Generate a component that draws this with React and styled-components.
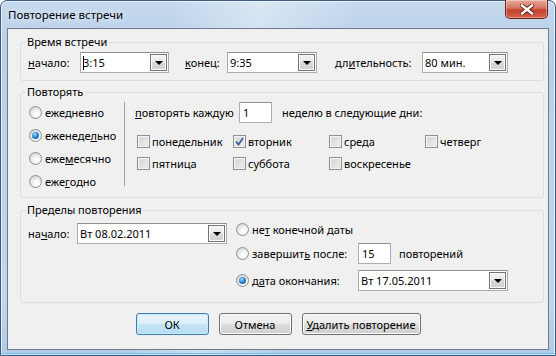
import styled, { createGlobalStyle } from "styled-components";

const FONT = `"Noto Sans", "Segoe UI", sans-serif`;

const GlobalStyle = createGlobalStyle`
  html, body { margin: 0; padding: 0; }
  body {
    width: 556px;
    height: 356px;
    overflow: hidden;
    font-family: ${FONT};
    font-size: 11px;
    color: #000;
  }
  * { box-sizing: border-box; }
`;

const Window = styled.div`
  width: 556px;
  height: 356px;
  display: flex;
  flex-direction: column;
  padding: 0 6px 5px;
  border: 1px solid #3d5d80;
  border-radius: 7px 7px 0 0;
  background:
    linear-gradient(100deg, rgba(255,255,255,0) 28%, rgba(255,255,255,0.35) 42%, rgba(255,255,255,0) 58%),
    linear-gradient(#c6daee, #b9d0e8 12%, #c0d6eb 85%, #b1cbe5);
  box-shadow: inset 0 0 0 1px rgba(255,255,255,0.6), inset 0 -2px 0 #73bdea;
`;

const TitleBar = styled.div`
  height: 27px;
  display: flex;
  align-items: center;
  justify-content: space-between;
  padding-left: 1px;
`;

const Title = styled.div`
  font-size: 11.5px;
  text-shadow: 0 0 6px rgba(255,255,255,0.9);
`;

const CloseButton = styled.div`
  align-self: flex-start;
  width: 43px;
  height: 19px;
  margin-top: -1px;
  margin-right: 1px;
  border: 1px solid #6b2418;
  border-top: none;
  border-radius: 0 0 5px 5px;
  background: linear-gradient(#e8a898, #d57461 45%, #c3412b 55%, #d8604a);
  box-shadow: inset 0 0 0 1px rgba(255,255,255,0.35);
  display: flex;
  align-items: center;
  justify-content: center;
`;

const Client = styled.div`
  flex: 1;
  display: flex;
  flex-direction: column;
  background: #f0f0f0;
  border: 1px solid #6c7a8b;
`;

const Group = styled.fieldset`
  margin: ${p => p.$top}px 4px 0 12px;
  padding: 0;
  min-width: 0;
  border: 1px solid #d5dfe5;
  border-radius: 3px;
`;

const Legend = styled.legend`
  margin-left: 5px;
  padding: 0 1px;
  line-height: 14px;
  font-size: 11px;
`;

const Acc = styled.span`
  text-decoration: underline;
`;

const TimeRow = styled.div`
  display: flex;
  align-items: center;
  padding: 3px 0 7px 7px;
`;

const Label = styled.span`
  width: ${p => (p.$w ? `${p.$w}px` : "auto")};
  margin-left: ${p => p.$ml || 0}px;
  flex: none;
  white-space: nowrap;
`;

const Combo = styled.div`
  width: ${p => p.$w}px;
  height: 21px;
  flex: none;
  display: flex;
  background: #fff;
  border: 1px solid #a9abb0;
  border-top-color: #8d9096;
`;

const ComboText = styled.div`
  flex: 1;
  display: flex;
  align-items: center;
  padding-left: 2px;
  white-space: nowrap;
`;

const Caret = styled.span`
  display: inline-block;
  width: 1px;
  height: 14px;
  margin-right: -1px;
  background: #000;
`;

const DropButton = styled.div`
  width: 17px;
  margin: 1px;
  border: 1px solid #747474;
  background: linear-gradient(#f4f4f4, #e6e6e6 50%, #d8d8d8 50%, #d2d2d2);
  box-shadow: inset 0 0 0 1px #fafafa;
  display: flex;
  align-items: center;
  justify-content: center;
  &::after {
    content: "";
    border-left: 4px solid transparent;
    border-right: 4px solid transparent;
    border-top: 4px solid #000;
    margin-top: 1px;
  }
`;

const TextInput = styled.div`
  width: ${p => p.$w}px;
  height: 21px;
  flex: none;
  display: flex;
  align-items: center;
  padding-left: 3px;
  background: #fff;
  border: 1px solid #abadb3;
  border-top-color: #8e9196;
`;

const RepeatBody = styled.div`
  display: flex;
  padding-bottom: 4px;
`;

const FreqColumn = styled.div`
  width: 103px;
  flex: none;
  padding: 2px 0 0 8px;
`;

const Option = styled.div`
  height: ${p => p.$h || 23}px;
  width: ${p => (p.$w ? `${p.$w}px` : "auto")};
  flex: none;
  display: flex;
  align-items: center;
  white-space: nowrap;
`;

const Radio = styled.span`
  width: 13px;
  height: 13px;
  flex: none;
  margin-right: 3px;
  border-radius: 50%;
  border: 1px solid #8e8f8f;
  background: radial-gradient(circle at 60% 65%, #fdfdfd 20%, #e2e2e2 60%, #c9c9c9);
  display: flex;
  align-items: center;
  justify-content: center;
  &::after {
    content: "";
    display: ${p => (p.$on ? "block" : "none")};
    width: 7px;
    height: 7px;
    border-radius: 50%;
    background: radial-gradient(circle at 40% 35%, #a6e0ff, #2a89d8 45%, #0d3f80);
  }
`;

const DaysColumn = styled.div`
  flex: 1;
  margin: 3px 0 7px;
  padding-left: 10px;
  border-left: 1px solid #a0a0a0;
`;

const EveryRow = styled.div`
  height: 21px;
  display: flex;
  align-items: center;
`;

const DaysGrid = styled.div`
  display: grid;
  grid-template-columns: repeat(4, 96px);
  row-gap: 6px;
  margin: 10px 0 0 2px;
`;

const Day = styled.div`
  height: 16px;
  display: flex;
  align-items: center;
  white-space: nowrap;
`;

const Box = styled.span`
  width: 13px;
  height: 13px;
  flex: none;
  margin-right: 2px;
  border: 1px solid #8e8f8f;
  background: linear-gradient(135deg, #cfcfcf, #f6f6f6);
  box-shadow: inset 0 0 0 1px #f4f4f4, inset 0 0 0 2px #e0e0e0;
  display: flex;
  align-items: center;
  justify-content: center;
`;

const RangeBody = styled.div`
  display: flex;
  align-items: flex-start;
  padding: 2px 0 11px 7px;
`;

const StartRow = styled.div`
  display: flex;
  align-items: center;
  margin-top: 4px;
`;

const EndColumn = styled.div`
  margin-left: 9px;
  display: flex;
  flex-direction: column;
`;

const EndRow = styled.div`
  height: ${p => p.$h}px;
  margin-top: ${p => p.$mt || 0}px;
  display: flex;
  align-items: center;
`;

const ButtonRow = styled.div`
  display: flex;
  justify-content: center;
  gap: 10px;
  margin-top: 10px;
`;

const Button = styled.button`
  width: ${p => p.$w}px;
  height: 22px;
  padding: 0;
  white-space: nowrap;
  font-family: ${FONT};
  font-size: 11px;
  color: #000;
  border-radius: 3px;
  border: 1px solid ${p => (p.$primary ? "#3c7fb1" : "#707070")};
  background: ${p =>
    p.$primary
      ? "linear-gradient(#e9f5fd, #dbeffb 50%, #c6e5f8 50%, #b8ddf4)"
      : "linear-gradient(#f2f2f2, #ebebeb 50%, #dddddd 50%, #cfcfcf)"};
  box-shadow: inset 0 0 0 1px ${p => (p.$primary ? "#c9ecfc" : "#fcfcfc")};
`;

function Check({ on }) {
  return (
    <Box>
      {on && (
        <svg width="9" height="9" viewBox="0 0 9 9">
          <path d="M1 4.5 L3.5 7.5 L8 1" fill="none" stroke="#3d5a9c" strokeWidth="1.7" />
        </svg>
      )}
    </Box>
  );
}

function CloseGlyph() {
  return (
    <svg width="14" height="11" viewBox="0 0 14 11">
      <path d="M2 1.5 L12 9.5 M12 1.5 L2 9.5" stroke="#5a1a10" strokeWidth="4.2" strokeLinecap="square" />
      <path d="M2 1.5 L12 9.5 M12 1.5 L2 9.5" stroke="#fff" strokeWidth="2.4" strokeLinecap="square" />
    </svg>
  );
}

const days = [
  { name: "понедельник" },
  { name: "вторник", on: true },
  { name: "среда" },
  { name: "четверг" },
  { name: "пятница" },
  { name: "суббота" },
  { name: "воскресенье" },
];

export default function App() {
  return (
    <>
      <GlobalStyle />
      <Window>
        <TitleBar>
          <Title>Повторение встречи</Title>
          <CloseButton>
            <CloseGlyph />
          </CloseButton>
        </TitleBar>
        <Client>
          <Group $top={6}>
            <Legend>Время встречи</Legend>
            <TimeRow>
              <Label $w={52}><Acc>н</Acc>ачало:</Label>
              <Combo $w={89}>
                <ComboText><Caret />3:15</ComboText>
                <DropButton />
              </Combo>
              <Label $w={42} $ml={16}><Acc>к</Acc>онец:</Label>
              <Combo $w={90}>
                <ComboText>9:35</ComboText>
                <DropButton />
              </Combo>
              <Label $w={87} $ml={18}>дл<Acc>и</Acc>тельность:</Label>
              <Combo $w={86}>
                <ComboText>80 мин.</ComboText>
                <DropButton />
              </Combo>
            </TimeRow>
          </Group>

          <Group $top={4}>
            <Legend>Повторять</Legend>
            <RepeatBody>
              <FreqColumn>
                <Option><Radio /><span>еже<Acc>д</Acc>невно</span></Option>
                <Option><Radio $on /><span>еженеде<Acc>л</Acc>ьно</span></Option>
                <Option><Radio /><span>еже<Acc>м</Acc>есячно</span></Option>
                <Option><Radio /><span>еже<Acc>г</Acc>одно</span></Option>
              </FreqColumn>
              <DaysColumn>
                <EveryRow>
                  <Label $w={104}><Acc>п</Acc>овторять каждую</Label>
                  <TextInput $w={33}>1</TextInput>
                  <Label $ml={10}>неделю в следующие дни:</Label>
                </EveryRow>
                <DaysGrid>
                  {days.map(d => (
                    <Day key={d.name}>
                      <Check on={d.on} />
                      {d.name}
                    </Day>
                  ))}
                </DaysGrid>
              </DaysColumn>
            </RepeatBody>
          </Group>

          <Group $top={5}>
            <Legend>Пределы повторения</Legend>
            <RangeBody>
              <StartRow>
                <Label $w={49}>на<Acc>ч</Acc>ало:</Label>
                <Combo $w={150}>
                  <ComboText>Вт 08.02.2011</ComboText>
                  <DropButton />
                </Combo>
              </StartRow>
              <EndColumn>
                <EndRow $h={20}>
                  <Option $h={20}><Radio /><span>не<Acc>т</Acc> конечной даты</span></Option>
                </EndRow>
                <EndRow $h={21} $mt={4}>
                  <Option $h={21} $w={122}><Radio /><span>завершит<Acc>ь</Acc> после:</span></Option>
                  <TextInput $w={33}>15</TextInput>
                  <Label $ml={8}>повторений</Label>
                </EndRow>
                <EndRow $h={21} $mt={6}>
                  <Option $h={21} $w={122}><Radio $on /><span>д<Acc>а</Acc>та окончания:</span></Option>
                  <Combo $w={150}>
                    <ComboText>Вт 17.05.2011</ComboText>
                    <DropButton />
                  </Combo>
                </EndRow>
              </EndColumn>
            </RangeBody>
          </Group>

          <ButtonRow>
            <Button $w={73} $primary>ОК</Button>
            <Button $w={73}>Отмена</Button>
            <Button $w={119}><Acc>У</Acc>далить повторение</Button>
          </ButtonRow>
        </Client>
      </Window>
    </>
  );
}
